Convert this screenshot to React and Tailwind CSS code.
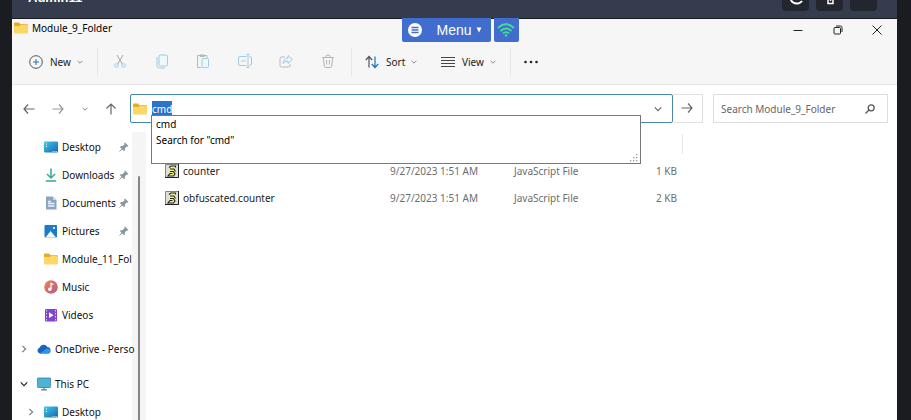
import React from "react";

const Chevron = ({ dir = "down", className = "" }) => {
  const d = dir === "down" ? "M1 3l4 4 4-4" : "M3 1l4 4-4 4";
  return (
    <svg viewBox="0 0 10 10" className={`shrink-0 ${className}`} fill="none" stroke="currentColor" strokeWidth="1.4">
      <path d={d} />
    </svg>
  );
};

const Folder = () => (
  <svg viewBox="0 0 14 12" className="h-3 w-3.5 shrink-0">
    <path d="M0 1.5Q0 .5 1 .5h4l1.5 1.7H13q1 0 1 1V10H0z" fill="#e9a825" />
    <path d="M0 4h5.5L7 2.9h6q1 0 1 .9v6.700q0 1-1 1H1q-1 0-1-1z" fill="#fbd765" />
  </svg>
);

const DesktopIcon = () => (
  <svg viewBox="0 0 14 12" className="h-3 w-3.5 shrink-0">
    <defs>
      <linearGradient id="desk" x1="0" y1="0" x2="1" y2="1">
        <stop offset="0" stopColor="#45c7e6" />
        <stop offset="1" stopColor="#1468ad" />
      </linearGradient>
    </defs>
    <rect y=".5" width="14" height="11" rx="1" fill="url(#desk)" />
    <path d="M2 3h1M2 5.500h1" stroke="#fff" strokeWidth="1.200" />
    <path d="M8.500 10.500h1M10.500 10.500h1M12.300 10.500h.8" stroke="#cdefff" />
  </svg>
);

const DownloadsIcon = () => (
  <svg viewBox="0 0 14 14" className="h-3.5 w-3.5 shrink-0" fill="none" stroke="#35ab90" strokeWidth="1.500">
    <path d="M7 .5v9M3 6l4 4 4-4M1.800 13h10.400" />
  </svg>
);

const DocumentsIcon = () => (
  <svg viewBox="0 0 14 14" className="h-3.5 w-3.5 shrink-0">
    <path d="M2 .5h7l3.500 3.500v9.500H2z" fill="#8ba5c2" />
    <path d="M9 .5L12.500 4H9z" fill="#cbd8e6" />
    <path d="M4 5.500h3M4 7.500h6.500M4 10h6.500" stroke="#edf4fb" strokeWidth="1.300" />
  </svg>
);

const PicturesIcon = () => (
  <svg viewBox="0 0 14 14" className="h-3.5 w-3.5 shrink-0">
    <rect x=".5" y="1" width="12.500" height="12.500" rx="1" fill="#2079c6" />
    <path d="M1.500 13.500l5-6.500 5.500 6.500z" fill="#eef8ff" />
    <circle cx="10" cy="4" r="1.100" fill="#fff" />
  </svg>
);

const MusicIcon = () => (
  <svg viewBox="0 0 14 14" className="h-3.5 w-3.5 shrink-0">
    <defs>
      <linearGradient id="music" x1="0" y1="0" x2="1" y2="1">
        <stop offset="0" stopColor="#ec8654" />
        <stop offset="1" stopColor="#b05a91" />
      </linearGradient>
    </defs>
    <circle cx="7" cy="7" r="6.800" fill="url(#music)" />
    <circle cx="5.800" cy="9.200" r="1.700" fill="#fff" />
    <path d="M7 9V3.500l2.500 1" stroke="#fff" strokeWidth="1.200" fill="none" />
  </svg>
);

const VideosIcon = () => (
  <svg viewBox="0 0 14 14" className="h-3.5 w-3.5 shrink-0">
    <rect x="1" y="1" width="12" height="12.500" rx="1" fill="#8443cf" />
    <path d="M2.500 2v11M11.500 2v11" stroke="#ddc4f7" strokeDasharray="1.500 1.500" />
    <path d="M5 4.300l4.500 2.900L5 10z" fill="#fff" />
  </svg>
);

const CloudIcon = () => (
  <svg viewBox="0 0 14 10" className="h-2.5 w-3.5 shrink-0">
    <path d="M3 9.500a3 3 0 01-.5-5.800A4.200 4.200 0 0110.300 3 3.300 3.300 0 0111 9.500z" fill="#1763bd" />
    <path d="M3 9.500L9.500 4.500a3.300 3.300 0 014 3.500q-.5 1.500-2 1.500z" fill="#3295e5" />
  </svg>
);

const PcIcon = () => (
  <svg viewBox="0 0 14 13" className="h-3.5 w-3.5 shrink-0">
    <rect x=".4" y=".5" width="13.200" height="9.500" rx=".8" fill="#4db5d3" stroke="#347f9f" strokeWidth=".8" />
    <path d="M7 10v2M4 12.300h6" stroke="#56808f" strokeWidth="1.200" />
  </svg>
);

const Pin = () => (
  <svg viewBox="0 0 10 10" className="h-2.5 w-2.5 shrink-0">
    <path d="M6 .5L9.500 4l-.9.700-.9-.2L6 6.300l-.2 2.200-1 .6L1 5.200l.6-1 2.200-.2 1.700-1.800-.2-.9z" fill="#8a969e" />
    <path d="M3 7L.5 9.500" stroke="#8a969e" />
  </svg>
);

const ScriptIcon = () => (
  <svg viewBox="0 0 14 14" className="h-3.5 w-3.5 shrink-0">
    <path d="M.5 .5h13v13H.5z" fill="#dededa" stroke="#858585" />
    <path d="M13.500 0v13.500H0" fill="none" stroke="#222" />
    <path d="M5 2.500Q6 1.500 10.500 2L9 4.500q2.500 1.500 1.500 4L8 12H3l2-3-1.500-2.500z" fill="#f0ef7c" />
    <path d="M4 3.500L6 2h4.500v1.500M5 5h4l1.500 2.500M5 7.500h3.500L10 10l-1.500 2H3L5 9.500H7.500" fill="none" stroke="#222" strokeWidth="1.100" />
  </svg>
);

const pinned = [
  ["Desktop", DesktopIcon, true],
  ["Downloads", DownloadsIcon, true],
  ["Documents", DocumentsIcon, true],
  ["Pictures", PicturesIcon, true],
  ["Module_11_Fol", Folder, false],
  ["Music", MusicIcon, false],
  ["Videos", VideosIcon, false],
];

const files = [
  ["counter", "9/27/2023 1:51 AM", "JavaScript File", "1 KB"],
  ["obfuscated.counter", "9/27/2023 1:51 AM", "JavaScript File", "2 KB"],
];

const tools = [
  ["Cut", <><path d="M4 1l5.500 9.500M10 1L4.500 10.500" stroke="#a5a5a5" /><circle cx="3.500" cy="11.500" r="1.800" /><circle cx="10.500" cy="11.500" r="1.800" /></>],
  ["Copy", <><rect x="4" y="1" width="8.500" height="11" rx="1.500" fill="#edf7fc" /><path d="M2 3v8.500Q2 14 4.500 14H10" /></>],
  ["Paste", <><path d="M5 13.500H1.500v-12H11V4M4 1h4.500v1.500H4z" stroke="#b9b9b4" /><rect x="6" y="4.500" width="6.500" height="9" rx="1" fill="#edf7fc" /></>],
  ["Rename", <><path d="M8.500 2.500H2q-1.500 0-1.500 1.500v6q0 1.500 1.500 1.500h6.500M11.500 2.500q2 0 2 1.500v6q0 1.500-2 1.500M8.500 .5h3M10 .5v13M8.500 13.500h3M3 7h5" /></>],
  ["Share", <><path d="M6 3H2.500Q1 3 1 4.500v7Q1 13 2.500 13h7q1.500 0 1.500-1.500V10" stroke="#b9b9b9" /><path d="M9 1.500L13.300 5.500 9 9.500V7Q5.500 7 4 9.500 4.500 4.500 9 4z" fill="#edf7fc" /></>],
  ["Delete", <path d="M1 3.500h12M4.500 3.500Q4.500 1 7 1t2.500 2.500M2.300 3.500l1 8.500q.2 1.500 1.500 1.500h4.400q1.300 0 1.500-1.500l1-8.500M5.600 6v4.500M8.400 6v4.500" stroke="#b5b5b5" />],
];

const Divider = () => <span className="h-7 w-px shrink-0 bg-[#e7e7e7]" />;

export default function App() {
  return (
    <div className="flex h-screen flex-col overflow-hidden bg-[#1b1c1f] pr-3.5 pl-3 font-['Noto_Sans',sans-serif] text-[10px] leading-4 text-[#222]">
      <header className="relative flex h-[18px] shrink-0 items-end justify-between bg-[#353c4e] pr-5 pl-4">
        <h1 className="mb-3.5 font-['Liberation_Sans',sans-serif] text-[13px] leading-3 font-bold text-white">Admin11</h1>
        <div className="mb-[7px] flex gap-[7px]">
          <button aria-label="Refresh" className="flex h-6 w-[27px] items-center justify-center rounded-sm bg-[#22262f]">
            <svg viewBox="0 0 14 14" className="h-3.5 w-3.5" fill="none" stroke="#fff" strokeWidth="2"><path d="M12 3a6 5 0 10 1 6" /></svg>
          </button>
          <button aria-label="Lock" className="flex h-6 w-[27px] items-center justify-center rounded-sm bg-[#22262f]">
            <svg viewBox="0 0 14 14" className="h-3.5 w-3.5" fill="none" stroke="#fff" strokeWidth="1.500"><path d="M5 1v10.500h5V5M7.500 6v3" /></svg>
          </button>
          <button aria-label="More" className="h-6 w-[27px] rounded-sm bg-[#22262f]" />
        </div>
        <div className="absolute top-[18px] left-1/2 z-10 flex -translate-x-[53px] gap-[3px] font-['Liberation_Sans',sans-serif]">
          <button className="flex h-6 w-[89px] items-center rounded-b-xs bg-[#416dce] pl-1.5 text-[14px] font-medium text-white">
            <svg viewBox="0 0 14 14" className="mr-[15px] h-3.5 w-3.5 shrink-0"><circle cx="7" cy="7" r="7" fill="#fff" /><path d="M3.500 4.500h7M3.500 7h7M3.500 9.500h7" stroke="#416dce" strokeWidth="1.300" /></svg>
            Menu
            <svg viewBox="0 0 6 6" className="ml-1 h-1.5 w-1.5 shrink-0"><path d="M.5 .5h5L3 5.500z" fill="#fff" /></svg>
          </button>
          <button aria-label="Network" className="flex h-6 w-[25px] items-center justify-center rounded-b-xs bg-[#416dce]">
            <svg viewBox="0 0 18 14" className="h-3.5 w-[18px]" fill="none" stroke="#43df91" strokeWidth="1.800"><path d="M1 5q8-7.500 16 0M3.500 8q5.500-5 11 0M6 10.500q3-2.800 6 0" /><circle cx="9" cy="12.500" r="1.200" fill="#43df91" stroke="none" /></svg>
          </button>
        </div>
      </header>

      <main className="mt-px flex min-h-0 flex-1 flex-col bg-white">
        <div className="flex h-[22px] shrink-0 items-start gap-1 bg-[#f6f6f6] pt-px pl-0.5">
          <div className="flex flex-1 items-center gap-1">
            <Folder />
            <span className="text-black">Module_9_Folder</span>
          </div>
          <div className="flex w-[106px] items-center justify-between pt-[3px] pr-[13px] text-[#222]">
            <button aria-label="Minimize" className="p-0.5"><svg viewBox="0 0 10 10" className="h-2.5 w-2.5" stroke="currentColor"><path d="M.5 5.500h9" /></svg></button>
            <button aria-label="Restore" className="p-0.5"><svg viewBox="0 0 10 10" className="h-2.5 w-2.5" fill="none" stroke="currentColor"><rect x="1" y="2.500" width="6.500" height="6.500" rx="1" /><path d="M3 1h4.500q1.500 0 1.500 1.500V7" /></svg></button>
            <button aria-label="Close" className="p-0.5"><svg viewBox="0 0 10 10" className="h-2.5 w-2.5" stroke="currentColor"><path d="M.5 .5l9 9M9.500 .5l-9 9" /></svg></button>
          </div>
        </div>

        <div className="flex h-11 shrink-0 items-center border-b border-[#e5e5e5] bg-[#f6f6f6] pb-0.5 pl-[17px]">
          <button className="flex w-[68px] items-center">
            <svg viewBox="0 0 14 14" className="mr-[7px] h-3.5 w-3.5 shrink-0" fill="none" stroke="#555"><circle cx="7" cy="7" r="6.300" /><path d="M7 4v6M4 7h6" stroke="#1874bd" /></svg>
            New
            <Chevron className="ml-1.5 h-1.5 w-1.5 text-[#777]" />
          </button>
          <Divider />
          <div className="flex w-[253px] items-center justify-between pr-4 pl-[15px]">
            {tools.map(([name, art]) => (
              <button key={name} aria-label={name} disabled>
                <svg viewBox="0 0 14 15" className="h-[15px] w-3.5" fill="none" stroke="#9ecbe5">{art}</svg>
              </button>
            ))}
          </div>
          <Divider />
          <button className="ml-[13px] flex w-[76px] items-center">
            <svg viewBox="0 0 14 14" className="mr-[7px] h-3.5 w-3.5 shrink-0" fill="none" strokeWidth="1.200"><path d="M4 12.500V1.500M.8 5L4 1.500 7.200 5" stroke="#555" /><path d="M10 1.500v11M6.800 9l3.200 3.500L13.200 9" stroke="#1874bd" /></svg>
            Sort
            <Chevron className="ml-1.5 h-1.5 w-1.5 text-[#777]" />
          </button>
          <button className="flex w-[69px] items-center">
            <svg viewBox="0 0 14 12" className="mr-[7px] h-3 w-3.5 shrink-0" stroke="#444"><path d="M0 1.500h14M0 4.500h14M0 7.500h14M0 10.500h14" /></svg>
            View
            <Chevron className="ml-1.5 h-1.5 w-1.5 text-[#777]" />
          </button>
          <Divider />
          <button aria-label="See more" className="ml-[13px]"><svg viewBox="0 0 14 4" className="h-1 w-3.5" fill="#222"><circle cx="1.500" cy="2" r="1.300" /><circle cx="7" cy="2" r="1.300" /><circle cx="12.500" cy="2" r="1.300" /></svg></button>
        </div>

        <div className="flex h-[47px] shrink-0 items-center pr-[9px]">
          <nav aria-label="History" className="flex w-[118px] items-center justify-between pr-[13px] pl-[11px] text-[#666]">
            <button aria-label="Back"><svg viewBox="0 0 12 12" className="h-3 w-3" fill="none" stroke="currentColor" strokeWidth="1.200"><path d="M11.500 6H1M5 1.500L1 6l4 4.500" /></svg></button>
            <button aria-label="Forward" className="text-[#999]"><svg viewBox="0 0 12 12" className="h-3 w-3" fill="none" stroke="currentColor" strokeWidth="1.200"><path d="M.5 6H11M7 1.500L11 6l-4 4.500" /></svg></button>
            <button aria-label="Recent"><Chevron className="h-1.5 w-1.5" /></button>
            <button aria-label="Up"><svg viewBox="0 0 12 12" className="h-3 w-3" fill="none" stroke="currentColor" strokeWidth="1.200"><path d="M6 11.500V1M1.500 5.500L6 1l4.500 4.500" /></svg></button>
          </nav>
          <div className="relative flex h-[29px] min-w-0 flex-1 items-center rounded-xs border border-[#4a86a8] pr-2.5 pl-0.5">
            <Folder />
            <div className="ml-[5px] flex flex-1">
              <span role="textbox" aria-label="Address" className="bg-[#2b72cb] text-white">cmd</span>
            </div>
            <button aria-label="Previous locations"><Chevron className="h-2 w-2 text-[#666]" /></button>
            <div className="absolute top-5 right-[31px] left-5 z-10 h-[49px] border border-[#777] bg-white pl-1 text-black">
              <ul>
                <li>cmd</li>
                <li>Search for "cmd"</li>
              </ul>
              <svg viewBox="0 0 8 8" className="absolute right-0.5 bottom-px h-2 w-2" fill="#999"><path d="M6 0h1.300v1.300H6zM3 3h1.300v1.300H3zM6 3h1.300v1.300H6zM0 6h1.300v1.300H0zM3 6h1.300v1.300H3zM6 6h1.300v1.300H6z" /></svg>
            </div>
          </div>
          <button aria-label="Go" className="flex h-[29px] w-[30px] items-center justify-center border border-l-0 border-[#e1e1e1] pr-0.5 pb-0.5 text-[#666]"><svg viewBox="0 0 12 12" className="h-3 w-3" fill="none" stroke="currentColor" strokeWidth="1.200"><path d="M.5 6H11M7 1.500L11 6l-4 4.500" /></svg></button>
          <label className="ml-2.5 flex h-[29px] w-[175px] items-center border border-[#dedede] pr-3 pl-[7px]">
            <input aria-label="Search" placeholder="Search Module_9_Folder" className="min-w-0 flex-1 outline-none placeholder:text-[#666]" />
            <svg viewBox="0 0 10 10" className="h-2.5 w-2.5" fill="none" stroke="#555" strokeWidth="1.300"><circle cx="6.200" cy="3.800" r="3" /><path d="M4 6L.5 9.500" /></svg>
          </label>
        </div>

        <div className="flex min-h-0 flex-1">
          <aside className="flex w-[134px] shrink-0 text-[#111]">
            <div className="z-10 flex w-[120px] flex-col pt-px whitespace-nowrap">
              {pinned.map(([name, Icon, pin]) => (
                <a key={name} href="#" className="flex h-7 shrink-0 items-center gap-1 pr-[3px] pl-8">
                  <Icon />
                  <span className="min-w-0 flex-1">{name}</span>
                  {pin && <Pin />}
                </a>
              ))}
              <a href="#" className="mt-1.5 flex h-7 shrink-0 items-center pl-2"><Chevron dir="right" className="mr-[9px] h-2 w-2 text-[#777]" /><CloudIcon /><span className="ml-1">OneDrive - Perso</span></a>
              <a href="#" className="mt-[7px] flex h-7 shrink-0 items-center pl-2"><Chevron className="mr-[9px] h-2 w-2 text-[#222]" /><PcIcon /><span className="ml-1">This PC</span></a>
              <a href="#" className="flex h-7 shrink-0 items-center pl-[15px]"><Chevron dir="right" className="mr-[9px] h-2 w-2 text-[#777]" /><DesktopIcon /><span className="ml-1">Desktop</span></a>
            </div>
            <div className="flex flex-1 justify-center bg-[#f5f5f5] pt-11"><div className="w-0.5 rounded-t-sm bg-[#858585]" /></div>
          </aside>

          <section className="min-w-0 flex-1 pl-[19px]">
            <div className="h-[25px] w-[518px] pt-0.5"><div className="h-5 border-r border-[#e9e9e9]" /></div>
            <table className="w-[512px] table-fixed text-[#6d6d6d]">
              <tbody>
                {files.map(([name, date, type, size]) => (
                  <tr key={name} className="h-[27px]">
                    <td className="w-[225px] p-0 text-[#222]"><div className="flex items-center gap-1"><ScriptIcon />{name}</div></td>
                    <td className="w-[124px] p-0">{date}</td>
                    <td className="p-0">{type}</td>
                    <td className="w-[60px] p-0 text-right">{size}</td>
                  </tr>
                ))}
              </tbody>
            </table>
          </section>
        </div>
      </main>
    </div>
  );
}
